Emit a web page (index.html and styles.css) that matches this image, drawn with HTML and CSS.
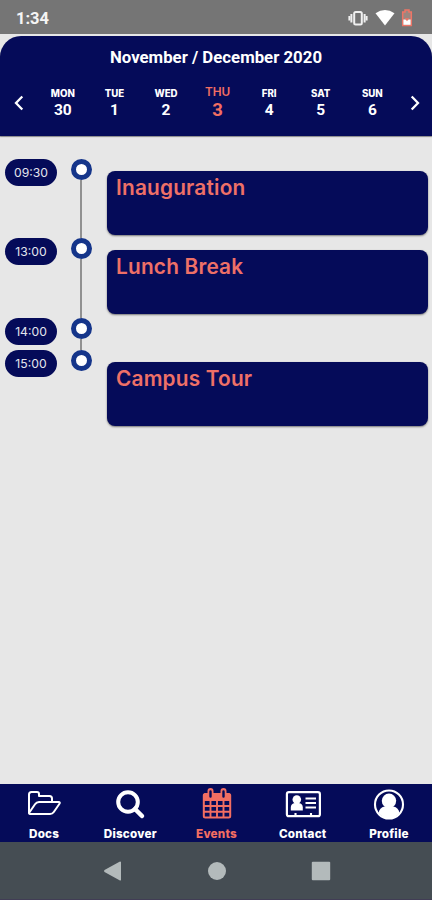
FILE: index.html
```html
<!DOCTYPE html>
<html lang="en">
<head>
  <meta charset="UTF-8">
  <title>Events</title>
  <link rel="stylesheet" href="styles.css">
</head>
<body>

<!-- Status bar -->
<div class="status-bar">
  <span class="clock">1:34</span>
  <div class="status-icons">
    <svg width="22" height="18" viewBox="0 0 22 18" fill="none" stroke="#f0f0f0">
      <rect x="7.2" y="3" width="7.600" height="12.500" rx="1.5" stroke-width="2"/>
      <path d="M4.400 5v8.500M17.600 5v8.500" stroke-width="2"/>
      <path d="M2.400 7v4.500M19.600 7v4.500" stroke-width="2"/>
    </svg>
    <svg width="20" height="18" viewBox="0 0 20 18">
      <path d="M.5 4.300Q10-2.200 19.500 4.300L10 16.500z" fill="#fff"/>
    </svg>
    <svg width="12" height="18" viewBox="0 0 12 18">
      <path d="M4 1h4v2h2.300v13.500H1.700V3H4z" fill="#9c8780" stroke="#ee7566" stroke-width="1.500"/>
      <path d="M2.400 10.500h7.200v5.300H2.400z" fill="#fff"/>
      <path d="M3.700 9.200h4.600L6 12.300z" fill="#ee7566"/>
    </svg>
  </div>
</div>

<!-- Week calendar -->
<div class="calendar">
  <h1>November / December 2020</h1>
  <div class="week">
    <svg class="arrow" width="10" height="16" viewBox="0 0 10 16"><path d="M8.300 1.500L2 8l6.300 6.500"/></svg>
    <div class="day"><span class="name">MON</span><span class="date">30</span></div>
    <div class="day"><span class="name">TUE</span><span class="date">1</span></div>
    <div class="day"><span class="name">WED</span><span class="date">2</span></div>
    <div class="day selected"><span class="name">THU</span><span class="date">3</span></div>
    <div class="day"><span class="name">FRI</span><span class="date">4</span></div>
    <div class="day"><span class="name">SAT</span><span class="date">5</span></div>
    <div class="day"><span class="name">SUN</span><span class="date">6</span></div>
    <svg class="arrow" width="10" height="16" viewBox="0 0 10 16"><path d="M1.700 1.500L8 8l-6.300 6.500"/></svg>
  </div>
</div>

<!-- Timeline -->
<div class="timeline">
  <div class="row">
    <span class="time">09:30</span>
    <div class="track"><span class="dot"></span></div>
    <div class="card">Inauguration</div>
  </div>
  <div class="row">
    <span class="time">13:00</span>
    <div class="track"><span class="dot"></span></div>
    <div class="card">Lunch Break</div>
  </div>
  <div class="row empty">
    <span class="time">14:00</span>
    <div class="track"><span class="dot"></span></div>
  </div>
  <div class="row">
    <span class="time">15:00</span>
    <div class="track last"><span class="dot"></span></div>
    <div class="card">Campus Tour</div>
  </div>
</div>

<!-- Tabs -->
<div class="tabs">
  <div class="tab">
    <svg width="36" height="32" viewBox="0 0 36 32" fill="none" stroke="#fff" stroke-width="2" stroke-linejoin="round">
      <path d="M3 25V6.500Q3 4 5.500 4h5.500q2 0 2 2v2h10.500q2.500 0 2.500 2.500V14"/>
      <path d="M3 25l6-8.800Q10.500 14 13 14h19.500q2.200 0 .8 2l-5.500 8Q26.500 26 24 26H5Q3 26 3 25z"/>
    </svg>
    <span>Docs</span>
  </div>
  <div class="tab">
    <svg width="32" height="32" viewBox="0 0 32 32" fill="none" stroke="#fff">
      <circle cx="14" cy="14" r="9.800" stroke-width="4"/>
      <path d="M21 21l7 7" stroke-width="4.500" stroke-linecap="round"/>
    </svg>
    <span>Discover</span>
  </div>
  <div class="tab active">
    <svg width="32" height="32" viewBox="0 0 32 32" fill="none" stroke="#f26e62">
      <rect x="2.800" y="6" width="26.400" height="23.500" rx="1.500" stroke-width="2"/>
      <path d="M3 6h26v6.500H3z" fill="#f26e62"/>
      <path d="M9.500 12v17M16 12v17M22.500 12v17M3 18h26M3 23.700h26" stroke-width="1.900"/>
      <path d="M9.500 3v5M22.500 3v5" stroke-width="6" stroke-linecap="round"/>
      <path d="M9.500 3.500v5M22.500 3.500v5" stroke="#050b59" stroke-width="2.400" stroke-linecap="round"/>
    </svg>
    <span>Events</span>
  </div>
  <div class="tab">
    <svg width="36" height="32" viewBox="0 0 36 32">
      <rect x="1.900" y="4.200" width="33" height="24" rx="2" fill="none" stroke="#fff" stroke-width="2.200"/>
      <circle cx="11.800" cy="11.500" r="4.300" fill="#fff"/>
      <path d="M5.800 22.500v-3q0-4 4-4.500h4q4 .5 4 4.500v3z" fill="#fff"/>
      <path d="M20.500 10.500h10.500M20.500 15h10.500M20.500 19.500h10.500M10.500 25v3M26 25v3" stroke="#fff" stroke-width="2.100"/>
    </svg>
    <span>Contact</span>
  </div>
  <div class="tab">
    <svg width="32" height="32" viewBox="0 0 32 32">
      <circle cx="16" cy="16.500" r="14" fill="none" stroke="#fff" stroke-width="2.100"/>
      <circle cx="16" cy="12.800" r="7.200" fill="#fff"/>
      <path d="M5.500 25q1-5.500 6-6.500h9q5 1 6 6.500Q22 30.500 16 30.500T5.500 25z" fill="#fff"/>
    </svg>
    <span>Profile</span>
  </div>
</div>

<!-- Android navigation -->
<div class="nav-bar">
  <svg width="20" height="20" viewBox="0 0 20 20"><path d="M18 1v18Q17.500 20 16.500 19.300L1.500 11Q.500 10 1.500 9L16.500.7Q17.500 0 18 1z"/></svg>
  <svg width="20" height="20" viewBox="0 0 20 20"><circle cx="10" cy="10" r="9"/></svg>
  <svg width="20" height="20" viewBox="0 0 20 20"><rect x=".8" y=".8" width="18.400" height="18.400" rx="1"/></svg>
</div>

</body>
</html>
```

FILE: styles.css
```css
* {
  box-sizing: border-box;
}
body {
  margin: 0;
  height: 900px;
  display: flex;
  flex-direction: column;
  background: #e7e7e7;
  font-family: Inter, "Open Sans", sans-serif;
  overflow: hidden;
}
svg {
  display: block;
  flex: none;
}

/* status bar */
.status-bar {
  height: 34px;
  flex: none;
  display: flex;
  align-items: center;
  justify-content: space-between;
  padding: 2px 19px 0 16px;
  background: #757575;
}
.clock {
  font: bold 16.500px Roboto, sans-serif;
  color: #f5f5f5;
}
.status-icons {
  display: flex;
  gap: 6px;
}

/* calendar */
.calendar {
  height: 100px;
  flex: none;
  margin-top: 2px;
  padding-top: 11px;
  border-radius: 21px 21px 0 0;
  background: #050b59;
  box-shadow: 0 1px 1px #888;
  color: #fff;
}
h1 {
  margin: 0;
  font: bold 16.800px/20px Roboto, sans-serif;
  text-align: center;
}
.week {
  display: flex;
  align-items: center;
  padding: 0 12px 0 14px;
  margin-top: 15px;
  height: 42px;
}
.arrow {
  fill: none;
  stroke: #fff;
  stroke-width: 2.3;
}
.arrow:first-child {
  margin-right: 13px;
}
.arrow:last-child {
  margin-left: auto;
}
.day {
  width: 51.600px;
  display: flex;
  flex-direction: column;
  align-items: center;
}
.name {
  font-size: 9.700px;
  font-weight: 800;
  line-height: 14px;
}
.date {
  font: bold 15.500px/19px Roboto, sans-serif;
}
.selected {
  color: #f26e62;
}
.selected .name {
  font-size: 11.800px;
  font-weight: 600;
}
.selected .date {
  font-size: 18.500px;
  line-height: 23px;
}

/* timeline */
.timeline {
  flex: 1;
  padding: 23px 4px 0 5px;
}
.row {
  display: flex;
  height: 79.300px;
}
.row.empty {
  height: 32.300px;
}
.time {
  width: 52px;
  height: 27px;
  border-radius: 14px;
  background: #050b59;
  color: #e4e6ee;
  font-size: 12.200px;
  line-height: 28px;
  text-align: center;
}
.track {
  width: 21px;
  margin: 0 15.500px 0 13.500px;
  display: flex;
  flex-direction: column;
  align-items: center;
}
.track::after {
  content: "";
  flex: 1;
  width: 2px;
  background: #919191;
}
.track.last::after {
  display: none;
}
.dot {
  width: 21px;
  height: 21px;
  border: 5px solid #15358a;
  border-radius: 50%;
  background: #fff;
}
.card {
  flex: 1;
  height: 64px;
  margin-top: 12px;
  padding: 4px 9px;
  border-radius: 8px;
  background: #050b59;
  box-shadow: 0 1px 2px #777;
  color: #ee7067;
  font-size: 20.800px;
  font-weight: 600;
  line-height: 26px;
  letter-spacing: 0.200px;
}

/* bottom tabs */
.tabs {
  height: 58px;
  flex: none;
  display: flex;
  padding-left: 1px;
  background: #050b59;
  color: #fff;
}
.tab {
  flex: 1;
  display: flex;
  flex-direction: column;
  align-items: center;
  padding-top: 4px;
  font-size: 11.700px;
  font-weight: 800;
  line-height: 16px;
  letter-spacing: 0.200px;
}
.tab span {
  margin-top: 6px;
}
.tab.active {
  color: #f26e62;
}

.nav-bar {
  height: 58px;
  flex: none;
  display: flex;
  justify-content: center;
  align-items: center;
  gap: 84px;
  padding-left: 1px;
  padding-top: 1px;
  background: #454d53;
  border-bottom: 1px solid #413d55;
  fill: #b3babb;
}
```
